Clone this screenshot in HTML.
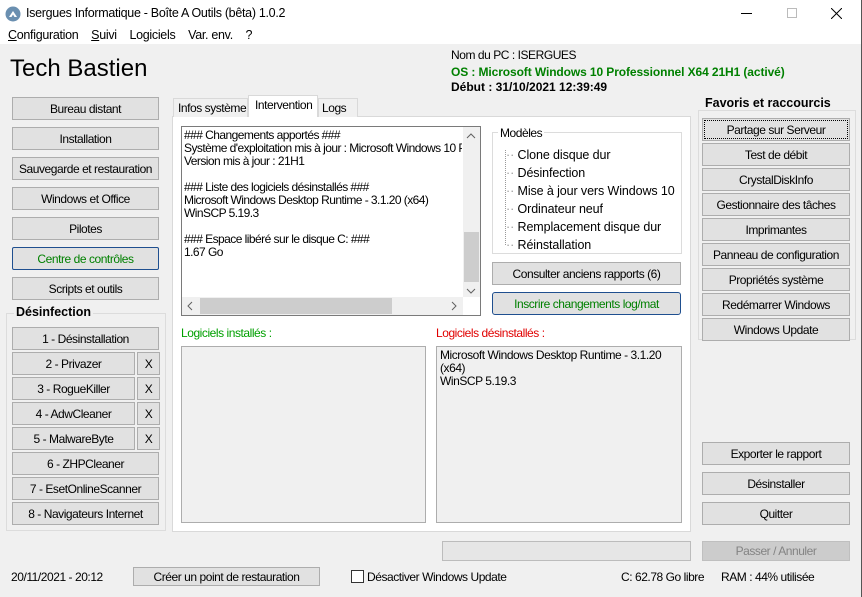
<!DOCTYPE html>
<html><head><meta charset="utf-8"><style>
*{box-sizing:border-box;margin:0;padding:0}
body{width:862px;height:597px;overflow:hidden;background:#f0f0f0;font-family:"Liberation Sans",sans-serif;font-size:12px;color:#000;position:relative}
.a{position:absolute}
.btn{position:absolute;background:#e1e1e1;border:1px solid #adadad;display:flex;align-items:center;justify-content:center;font-size:12px;letter-spacing:-0.45px;white-space:nowrap}
.grp{position:absolute;border:1px solid #dcdcdc}
.gl{position:absolute;background:#f0f0f0;font-weight:bold;font-size:12.5px;padding:0 2px}
.box{position:absolute;background:#fff;border:1px solid #828790}
.t{position:absolute;white-space:nowrap;letter-spacing:-0.45px}
</style></head><body>
<div class="a" style="left:0;top:0;width:862px;height:44px;background:#fff"></div>
<div class="a" style="left:861px;top:0;width:1px;height:597px;background:#555"></div>
<svg class="a" style="left:5px;top:6px" width="16" height="16"><circle cx="8" cy="8" r="7.5" fill="#6a8fb0"/><path d="M4 11 L8 5 L12 11 Z" fill="#fff"/><path d="M6.5 11 L8 8.5 L9.5 11Z" fill="#6a8fb0"/></svg>
<div class="t" style="left:26px;top:6px;font-size:12.5px;letter-spacing:-0.3px">Isergues Informatique - Boîte A Outils (bêta) 1.0.2</div>
<div class="a" style="left:741px;top:13px;width:11px;height:1px;background:#000"></div>
<div class="a" style="left:787px;top:8px;width:10px;height:10px;border:1px solid #bbb"></div>
<svg class="a" style="left:831px;top:8px" width="11" height="11"><path d="M0 0L11 11M11 0L0 11" stroke="#000" stroke-width="1"/></svg>
<div class="t" style="left:8px;top:28px;font-size:12.5px;letter-spacing:-0.3px"><u>C</u>onfiguration&nbsp;&nbsp;&nbsp;&nbsp;<u>S</u>uivi&nbsp;&nbsp;&nbsp;&nbsp;Logiciels&nbsp;&nbsp;&nbsp;&nbsp;Var. env.&nbsp;&nbsp;&nbsp;&nbsp;?</div>
<div class="t" style="left:10px;top:55px;font-size:24px;letter-spacing:0">Tech Bastien</div>
<div class="t" style="left:451px;top:48px">Nom du PC : ISERGUES</div>
<div class="t" style="left:451px;top:65px;color:#008000;font-weight:bold;letter-spacing:-0.1px">OS : Microsoft Windows 10 Professionnel X64 21H1 (activé)</div>
<div class="t" style="left:451px;top:80px;font-weight:bold;letter-spacing:0">Début : 31/10/2021 12:39:49</div>

<div class="btn" style="left:12px;top:97px;width:147px;height:23px">Bureau distant</div>
<div class="btn" style="left:12px;top:127px;width:147px;height:23px">Installation</div>
<div class="btn" style="left:12px;top:157px;width:147px;height:23px">Sauvegarde et restauration</div>
<div class="btn" style="left:12px;top:187px;width:147px;height:23px">Windows et Office</div>
<div class="btn" style="left:12px;top:217px;width:147px;height:23px">Pilotes</div>
<div class="btn" style="left:12px;top:247px;width:147px;height:23px;border:1px solid #1f4f8f;border-radius:2px;color:#008000">Centre de contrôles</div>
<div class="btn" style="left:12px;top:277px;width:147px;height:23px">Scripts et outils</div>

<div class="grp" style="left:6px;top:313px;width:160px;height:218px"></div>
<div class="gl" style="left:14px;top:305px">Désinfection</div>
<div class="btn" style="left:12px;top:327px;width:147px;height:23px">1 - Désinstallation</div>
<div class="btn" style="left:12px;top:352px;width:123px;height:23px">2 - Privazer</div><div class="btn" style="left:137px;top:352px;width:23px;height:23px">X</div>
<div class="btn" style="left:12px;top:377px;width:123px;height:23px">3 - RogueKiller</div><div class="btn" style="left:137px;top:377px;width:23px;height:23px">X</div>
<div class="btn" style="left:12px;top:402px;width:123px;height:23px">4 - AdwCleaner</div><div class="btn" style="left:137px;top:402px;width:23px;height:23px">X</div>
<div class="btn" style="left:12px;top:427px;width:123px;height:23px">5 - MalwareByte</div><div class="btn" style="left:137px;top:427px;width:23px;height:23px">X</div>
<div class="btn" style="left:12px;top:452px;width:147px;height:23px">6 - ZHPCleaner</div>
<div class="btn" style="left:12px;top:477px;width:147px;height:23px">7 - EsetOnlineScanner</div>
<div class="btn" style="left:12px;top:502px;width:147px;height:23px">8 - Navigateurs Internet</div>

<!-- tabs -->
<div class="a" style="left:172px;top:116px;width:519px;height:416px;background:#fff;border:1px solid #d9d9d9"></div>
<div class="a" style="left:173px;top:98px;width:75px;height:19px;border:1px solid #d9d9d9;border-bottom:none;background:#f0f0f0"></div>
<div class="t" style="left:178px;top:101px">Infos système</div>
<div class="a" style="left:318px;top:98px;width:40px;height:19px;border:1px solid #d9d9d9;border-bottom:none;background:#f0f0f0"></div>
<div class="t" style="left:322px;top:101px">Logs</div>
<div class="a" style="left:248px;top:95px;width:70px;height:22px;border:1px solid #d9d9d9;border-bottom:none;background:#fff"></div>
<div class="t" style="left:255px;top:98px">Intervention</div>

<div class="box" style="left:181px;top:126px;width:300px;height:190px;border-color:#7a7a7a"></div>
<div class="t" style="left:184px;top:129px;line-height:13px;width:278px;overflow:hidden;letter-spacing:-0.55px">### Changements apportés ###<br>Système d'exploitation mis à jour : Microsoft Windows 10 Pro<br>Version mis à jour : 21H1<br><br>### Liste des logiciels désinstallés ###<br>Microsoft Windows Desktop Runtime - 3.1.20 (x64)<br>WinSCP 5.19.3<br><br>### Espace libéré sur le disque C: ###<br>1.67 Go</div>
<div class="a" style="left:463px;top:127px;width:17px;height:170px;background:#f0f0f0"></div>
<div class="a" style="left:464px;top:232px;width:15px;height:50px;background:#cdcdcd"></div>
<svg class="a" style="left:466px;top:133px" width="10" height="6"><path d="M1 5L5 1L9 5" stroke="#606060" fill="none"/></svg>
<svg class="a" style="left:466px;top:288px" width="10" height="6"><path d="M1 1L5 5L9 1" stroke="#606060" fill="none"/></svg>
<div class="a" style="left:182px;top:297px;width:281px;height:18px;background:#f0f0f0"></div>
<div class="a" style="left:200px;top:298px;width:192px;height:16px;background:#cdcdcd"></div>
<svg class="a" style="left:187px;top:301px" width="6" height="10"><path d="M5 1L1 5L5 9" stroke="#606060" fill="none"/></svg>
<svg class="a" style="left:451px;top:301px" width="6" height="10"><path d="M1 1L5 5L1 9" stroke="#606060" fill="none"/></svg>

<div class="a" style="left:492px;top:132px;width:190px;height:122px;border:1px solid #dcdcdc;background:#fff"></div>
<div class="t" style="left:498px;top:126px;background:#fff;padding:0 2px">Modèles</div>
<div class="a" style="left:505px;top:150px;height:95px;border-left:1px dotted #999"></div>
<div class="t" style="left:506px;top:146px;line-height:18px;font-size:12.5px;letter-spacing:-0.1px">
<span style="color:#999">··</span> Clone disque dur<br><span style="color:#999">··</span> Désinfection<br><span style="color:#999">··</span> Mise à jour vers Windows 10<br><span style="color:#999">··</span> Ordinateur neuf<br><span style="color:#999">··</span> Remplacement disque dur<br><span style="color:#999">··</span> Réinstallation</div>
<div class="btn" style="left:492px;top:262px;width:189px;height:23px">Consulter anciens rapports (6)</div>
<div class="btn" style="left:492px;top:292px;width:189px;height:23px;border:1px solid #1f4f8f;border-radius:3px;color:#008000">Inscrire changements log/mat</div>

<div class="t" style="left:181px;top:326px;color:#00a000">Logiciels installés :</div>
<div class="t" style="left:436px;top:326px;color:#e00000">Logiciels désinstallés :</div>
<div class="box" style="left:181px;top:346px;width:245px;height:177px;background:#f0f0f0;border-color:#adadad"></div>
<div class="box" style="left:436px;top:346px;width:246px;height:177px;background:#f0f0f0;border-color:#adadad"></div>
<div class="t" style="left:440px;top:349px;line-height:13px">Microsoft Windows Desktop Runtime - 3.1.20<br>(x64)<br>WinSCP 5.19.3</div>

<!-- right -->
<div class="grp" style="left:698px;top:110px;width:158px;height:230px"></div>
<div class="gl" style="left:703px;top:96px">Favoris et raccourcis</div>
<div class="btn" style="left:702px;top:118px;width:148px;height:23px;outline:1px dotted #000;outline-offset:-3px">Partage sur Serveur</div>
<div class="btn" style="left:702px;top:143px;width:148px;height:23px">Test de débit</div>
<div class="btn" style="left:702px;top:168px;width:148px;height:23px">CrystalDiskInfo</div>
<div class="btn" style="left:702px;top:193px;width:148px;height:23px">Gestionnaire des tâches</div>
<div class="btn" style="left:702px;top:218px;width:148px;height:23px">Imprimantes</div>
<div class="btn" style="left:702px;top:243px;width:148px;height:23px">Panneau de configuration</div>
<div class="btn" style="left:702px;top:268px;width:148px;height:23px">Propriétés système</div>
<div class="btn" style="left:702px;top:293px;width:148px;height:23px">Redémarrer Windows</div>
<div class="btn" style="left:702px;top:318px;width:148px;height:23px">Windows Update</div>
<div class="btn" style="left:702px;top:442px;width:148px;height:23px">Exporter le rapport</div>
<div class="btn" style="left:702px;top:472px;width:148px;height:23px">Désinstaller</div>
<div class="btn" style="left:702px;top:502px;width:148px;height:23px">Quitter</div>
<div class="a" style="left:442px;top:541px;width:249px;height:20px;background:#e6e6e6;border:1px solid #bcbcbc"></div>
<div class="btn" style="left:702px;top:541px;width:148px;height:20px;background:#ccc;border-color:#bfbfbf;color:#838383">Passer / Annuler</div>

<div class="t" style="left:11px;top:570px">20/11/2021 - 20:12</div>
<div class="btn" style="left:133px;top:567px;width:187px;height:19px">Créer un point de restauration</div>
<div class="a" style="left:351px;top:570px;width:13px;height:13px;border:1px solid #333;background:#fff"></div>
<div class="t" style="left:367px;top:570px">Désactiver Windows Update</div>
<div class="t" style="left:621px;top:570px">C: 62.78 Go libre</div>
<div class="t" style="left:721px;top:570px">RAM : 44% utilisée</div>
</body></html>
